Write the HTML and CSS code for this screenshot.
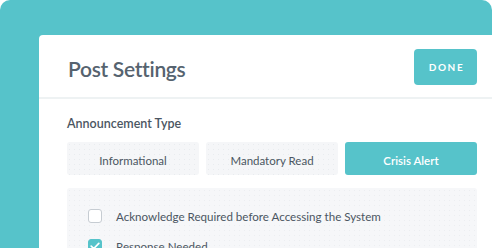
FILE: index.html
```html
<!DOCTYPE html>
<html>
<head>
<meta charset="utf-8">
<link rel="stylesheet" href="styles.css">
</head>
<body>
<div class="backdrop">
  <div class="card">
    <div class="header">
      <h1 class="title">Post Settings</h1>
      <button class="done">DONE</button>
    </div>
    <div class="body">
      <div class="label">Announcement Type</div>
      <div class="segments">
        <div class="seg">Informational</div>
        <div class="seg">Mandatory Read</div>
        <div class="seg active">Crisis Alert</div>
      </div>
      <div class="options">
        <label class="option">
          <span class="box"></span>
          <span class="opt-text">Acknowledge Required before Accessing the System</span>
        </label>
        <label class="option">
          <span class="box checked">
            <svg width="10" height="8" viewBox="0 0 10 8"><path d="M1.2 4.1 L3.8 6.5 L8.8 1.4" fill="none" stroke="#fff" stroke-width="1.7" stroke-linecap="round" stroke-linejoin="round"/></svg>
          </span>
          <span class="opt-text">Response Needed</span>
        </label>
      </div>
    </div>
  </div>
</div>
</body>
</html>
```
FILE: styles.css
```css
html, body {
  margin: 0;
  padding: 0;
  background: #ffffff;
  overflow: hidden;
}
body {
  width: 492px;
  height: 248px;
  font-family: Lato, "Open Sans", sans-serif;
}
.backdrop {
  background: #56c3ca;
  border-radius: 10px 10px 0 0;
  height: 248px;
  padding: 35px 0 0 39px;
  box-sizing: border-box;
  overflow: hidden;
}
.card {
  width: 470px;
  background: #ffffff;
  border-radius: 4px 0 0 0;
  min-height: 260px;
}
.header {
  height: 62px;
  display: flex;
  align-items: center;
  justify-content: space-between;
  padding: 0 32px 0 29px;
  border-bottom: 2px solid #eef2f3;
}
.title {
  margin: 0;
  font-size: 21px;
  font-weight: 600;
  color: #56636f;
  letter-spacing: -0.3px;
  padding-top: 4px;
}
.done {
  width: 63px;
  height: 36px;
  border: none;
  border-radius: 4px;
  background: #56c3ca;
  color: #ffffff;
  font-family: Lato, sans-serif;
  font-size: 10px;
  font-weight: 700;
  letter-spacing: 1.6px;
  padding: 0 0 0 2px;
  margin-top: 2px;
}
.body {
  padding: 17px 32px 0 28px;
}
.label {
  font-size: 12.5px;
  font-weight: 600;
  color: #4b5662;
  line-height: 16px;
}
.segments {
  display: grid;
  grid-template-columns: repeat(3, 132px);
  gap: 7px;
  margin-top: 10px;
}
.seg {
  height: 33px;
  box-sizing: border-box;
  padding-top: 3px;
  border-radius: 3px;
  background-color: #f5f6f8;
  background-image: radial-gradient(circle, #e9ecef 0.6px, transparent 0.9px);
  background-size: 5px 5px;
  display: flex;
  align-items: center;
  justify-content: center;
  font-size: 11.5px;
  color: #4b5662;
}
.seg.active {
  background: #56c3ca;
  color: #ffffff;
  font-weight: 600;
}
.options {
  margin-top: 13px;
  background-color: #f6f7f9;
  background-image: radial-gradient(circle, #eceef1 0.6px, transparent 0.9px);
  background-size: 5px 5px;
  border-radius: 3px 3px 0 0;
  padding: 20px 0 10px 21px;
  display: flex;
  flex-direction: column;
  gap: 14px;
}
.option {
  display: flex;
  align-items: center;
  gap: 14px;
  font-size: 11.6px;
  color: #4b5662;
  line-height: 14px;
}
.opt-text {
  padding-top: 2px;
}
.box {
  width: 14px;
  height: 14px;
  box-sizing: border-box;
  border: 1px solid #c6ccd2;
  border-radius: 3px;
  background: #ffffff;
  display: flex;
  align-items: center;
  justify-content: center;
  flex: none;
}
.box.checked {
  background: #56c3ca;
  border-color: #56c3ca;
}
```
